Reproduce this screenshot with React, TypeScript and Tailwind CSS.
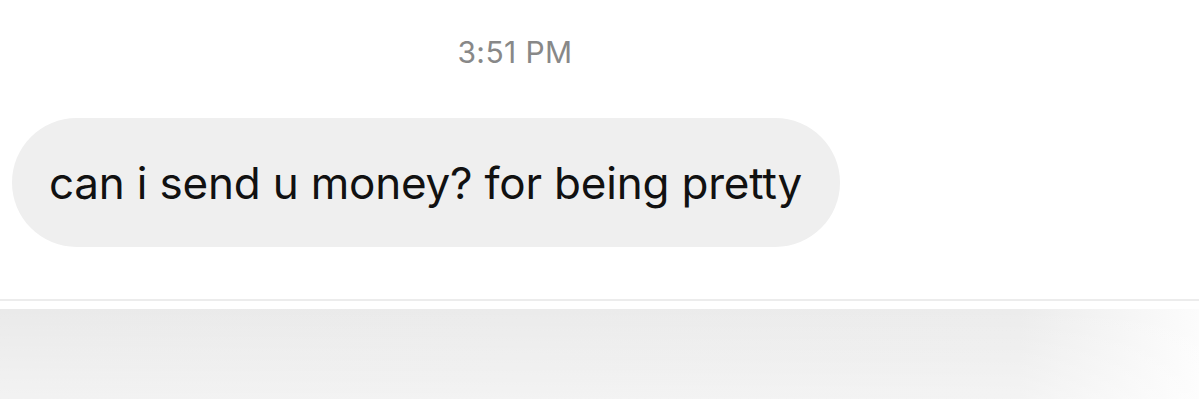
import React from "react";

export default function App() {
  return (
    <div className="w-[1199px] h-[399px] bg-white flex flex-col overflow-hidden" style={{ fontFamily: "Inter, 'Liberation Sans', sans-serif" }}>
      {/* Timestamp */}
      <div className="w-[1030px] flex justify-center pt-[36px]">
        <span className="text-[30px] leading-[32px] text-[#888888] tracking-[0.4px]">3:51 PM</span>
      </div>

      {/* Incoming bubble */}
      <div className="flex pl-[12px] mt-[50px]">
        <div className="h-[129px] rounded-full bg-[#efefef] flex items-center pl-[37px] pr-[38px]">
          <span className="text-[44px] leading-none text-[#111] tracking-[-0.2px]">can i send u money? for being pretty</span>
        </div>
      </div>

      {/* Divider */}
      <div className="mt-[52px] h-[2px] bg-[#ececec]" />
      <div className="h-[8px] bg-white" />

      {/* Composer area */}
      <div className="flex-1 bg-linear-to-r from-[#eaeaea] via-[#ececec] via-85% to-[#fcfcfc]">
        <div className="h-full bg-linear-to-b from-transparent to-white/40" />
      </div>
    </div>
  );
}
